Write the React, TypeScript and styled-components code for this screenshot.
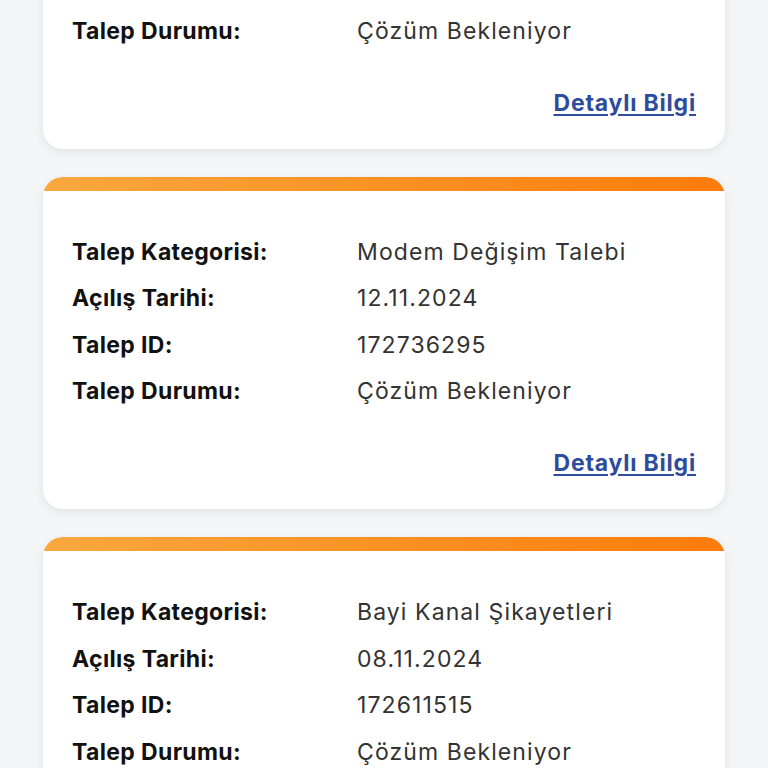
import React from 'react';
import styled, {createGlobalStyle} from 'styled-components';

const GlobalStyle = createGlobalStyle`
html, body {
    margin: 0;
    padding: 0;
    background: #f4f5f7;
    font-family: Inter, "Noto Sans", sans-serif;
    overflow: hidden;
}
`;

const Page = styled.div`
display: flex;
flex-direction: column;
gap: 28px;
padding: 0 43px;
margin-top: -184px;
`;

const Card = styled.div`
background: #ffffff;
border-radius: 20px;
overflow: hidden;
box-shadow: 0 3px 10px rgba(0, 0, 0, 0.07);
`;

const Strip = styled.div`
height: 14px;
background: linear-gradient(90deg, #f9a83e 0%, #fb7c0b 100%);
`;

const Body = styled.div`
padding: 38px 29px 31px 29px;
display: flex;
flex-direction: column;
`;

const Row = styled.div`
display: grid;
grid-template-columns: 285px 1fr;
height: 46.5px;
align-items: center;
font-size: 23px;
`;

const Label = styled.span`
font-weight: 700;
letter-spacing: 0.35px;
color: #111111;
`;

const Value = styled.span`
font-weight: 400;
letter-spacing: 1.1px;
color: #333333;
`;

const LinkRow = styled.div`
display: flex;
justify-content: flex-end;
margin-top: 33.5px;
height: 30px;
align-items: center;
`;

const Link = styled.a`
font-size: 23px;
font-weight: 700;
letter-spacing: 0.8px;
color: #2d4c9c;
text-decoration: underline;
text-underline-offset: 3px;
text-decoration-thickness: 2px;
cursor: pointer;
`;

type Request = {
    category: string;
    date: string;
    id: string;
    status: string;
};

const requests: Request[] = [
    {category: 'İnternet Arıza Kaydı', date: '15.11.2024', id: '172801144', status: 'Çözüm Bekleniyor'},
    {category: 'Modem Değişim Talebi', date: '12.11.2024', id: '172736295', status: 'Çözüm Bekleniyor'},
    {category: 'Bayi Kanal Şikayetleri', date: '08.11.2024', id: '172611515', status: 'Çözüm Bekleniyor'},
];

const RequestCard = ({req}: {req: Request}) => (
    <Card>
        <Strip/>
        <Body>
            <Row><Label>Talep Kategorisi:</Label><Value>{req.category}</Value></Row>
            <Row><Label>Açılış Tarihi:</Label><Value>{req.date}</Value></Row>
            <Row><Label>Talep ID:</Label><Value>{req.id}</Value></Row>
            <Row><Label>Talep Durumu:</Label><Value>{req.status}</Value></Row>
            <LinkRow>
                <Link>Detaylı Bilgi</Link>
            </LinkRow>
        </Body>
    </Card>
);

const App = () => {
    return (
        <>
            <GlobalStyle/>
            <Page>
                {requests.map(r => <RequestCard key={r.id} req={r}/>)}
            </Page>
        </>
    );
};

export default App;
